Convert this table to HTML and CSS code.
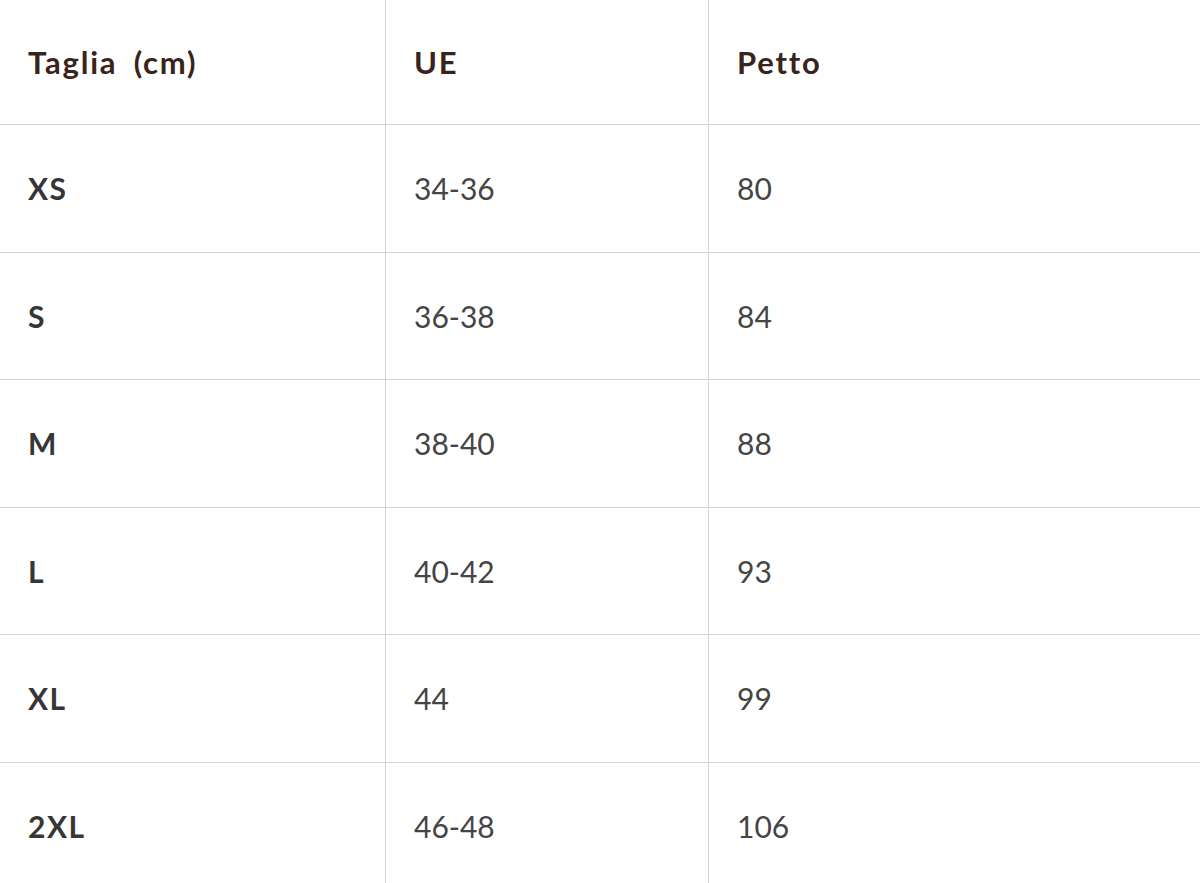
FILE: index.html
```html
<!DOCTYPE html>
<html lang="it">
<head>
<meta charset="utf-8">
<title>Tabella taglie</title>
<link rel="stylesheet" href="styles.css">
</head>
<body>
<table class="size-table">
  <thead>
    <tr><th class="c1">Taglia (cm)</th><th class="c2">UE</th><th class="c3">Petto</th></tr>
  </thead>
  <tbody>
    <tr><td class="size">XS</td><td>34-36</td><td>80</td></tr>
    <tr><td class="size">S</td><td>36-38</td><td>84</td></tr>
    <tr><td class="size">M</td><td>38-40</td><td>88</td></tr>
    <tr><td class="size">L</td><td>40-42</td><td>93</td></tr>
    <tr><td class="size">XL</td><td>44</td><td>99</td></tr>
    <tr><td class="size">2XL</td><td>46-48</td><td>106</td></tr>
  </tbody>
</table>
</body>
</html>
```
FILE: styles.css
```css
html, body {
  margin: 0;
  padding: 0;
  background: #ffffff;
}
body {
  font-family: "Lato", "Open Sans", sans-serif;
  overflow: hidden;
}
.size-table {
  border-collapse: collapse;
  table-layout: fixed;
  width: 1260px;
}
.size-table th,
.size-table td {
  text-align: left;
  padding: 0 0 0 28px;
  border: 1px solid #d4d4d4;
  font-size: 30px;
  vertical-align: middle;
}
.size-table tr:first-child th { border-top: none; }
.size-table th:first-child,
.size-table td:first-child { border-left: none; }
.size-table th {
  height: 124px;
  color: #38241a;
  font-weight: 700;
  font-size: 31px;
  letter-spacing: 1.8px;
  word-spacing: 7px;
}
.size-table td {
  height: 126.5px;
  color: #454545;
  font-weight: 400;
}
.size-table td.size {
  color: #363636;
  font-weight: 700;
  letter-spacing: 1.5px;
}
.c1 { width: 357px; }
.c2 { width: 294px; }
.c3 { width: auto; }
```
